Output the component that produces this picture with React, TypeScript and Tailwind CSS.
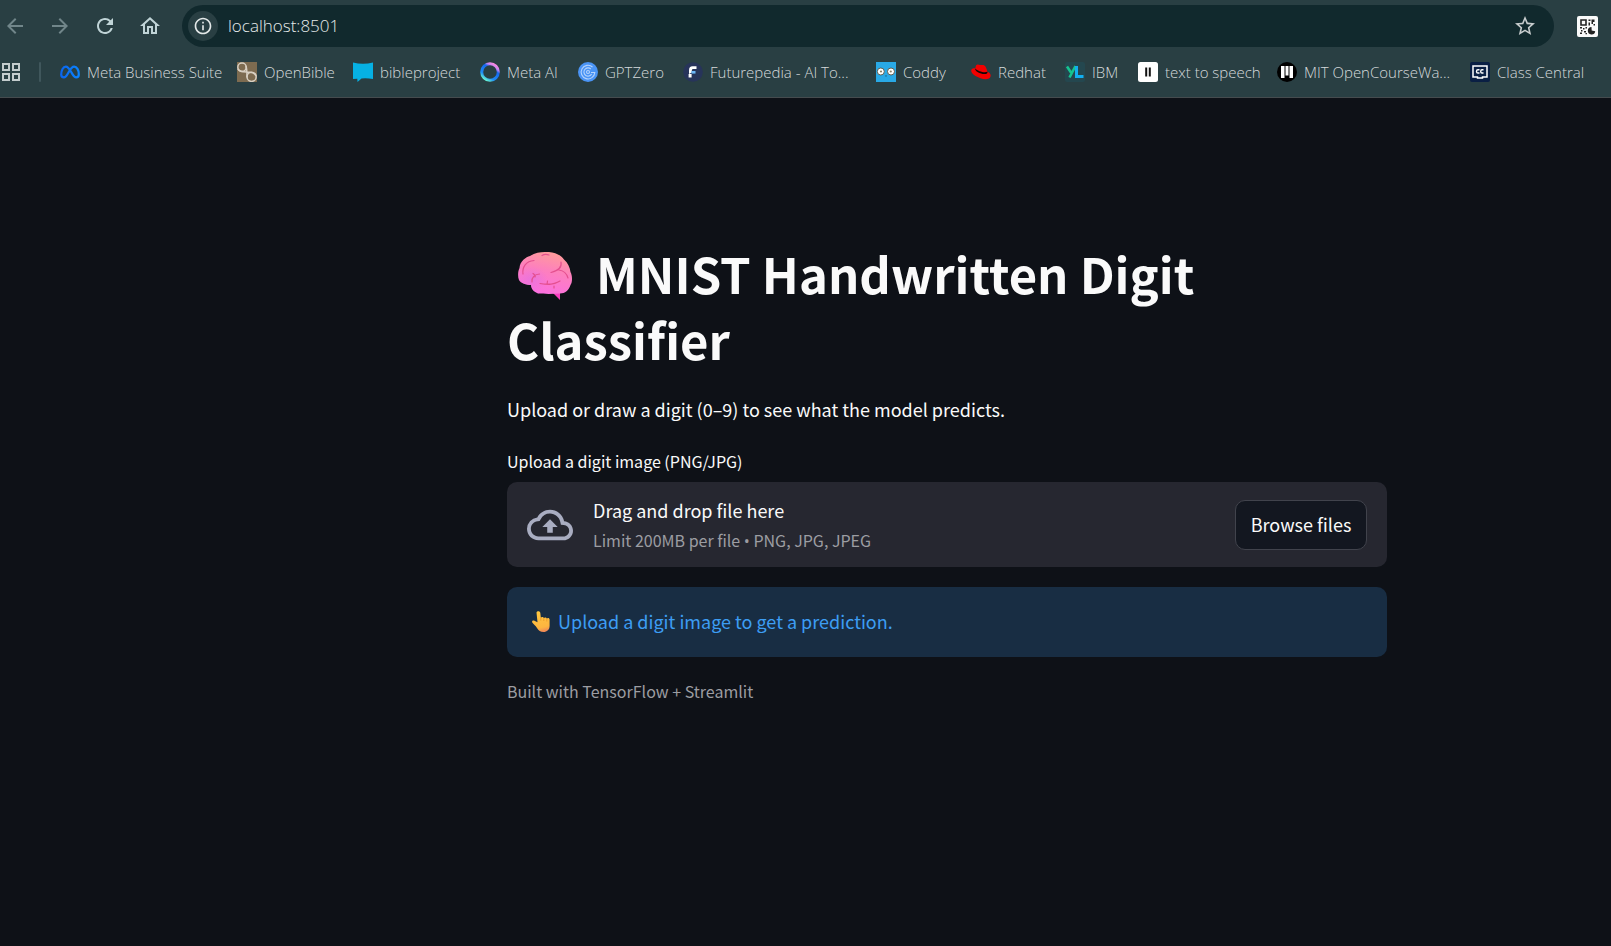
import type { ReactNode } from "react";
import { MdArrowBack, MdArrowForward, MdRefresh, MdOutlineHome, MdOutlineCloudUpload, MdStarBorder, MdInfoOutline } from "react-icons/md";

function MetaIcon() {
  return (
    <svg viewBox="0 0 20 20" className="size-5" aria-hidden="true">
      <defs>
        <linearGradient id="meta" x1="0" x2="1">
          <stop offset="0" stopColor="#0a66f0" />
          <stop offset="1" stopColor="#0a84ff" />
        </linearGradient>
      </defs>
      <path
        d="M1.2 12.6C1.2 8.2 3.2 4.6 5.8 4.6C8.2 4.6 9.6 7.2 11.2 10C12.8 12.8 14 15.4 16.2 15.4C18 15.4 18.8 14.2 18.8 12.2C18.8 8 16.8 4.6 14.2 4.6C12 4.6 10.5 6.8 8.9 9.7C7.2 12.8 6.1 15.4 3.9 15.4C2.2 15.4 1.2 14.4 1.2 12.6Z"
        fill="none"
        stroke="url(#meta)"
        strokeWidth="2.2"
      />
    </svg>
  );
}

function OpenBibleIcon() {
  return (
    <svg viewBox="0 0 20 20" className="size-5" aria-hidden="true">
      <rect width="20" height="20" fill="#7d6b50" />
      <g fill="none" stroke="#d9d0c2" strokeWidth="1.5">
        <circle cx="5" cy="5.2" r="4.2" />
        <circle cx="14.6" cy="14.8" r="4.6" />
        <path d="M1 7C2 10 7 10 10 10S18 11 19 14M9 4C10 7 10 12 10 15.500" />
      </g>
    </svg>
  );
}

function BibleProjectIcon() {
  return (
    <svg viewBox="0 0 20 20" className="size-5" aria-hidden="true">
      <path d="M0 0.500Q10 3 20 0.500V17Q14 16 8.500 16.500L4.500 20L4.300 16.700L0 17Z" fill="#06b1e4" />
    </svg>
  );
}

function MetaAiIcon() {
  return (
    <svg viewBox="0 0 20 20" className="size-5" aria-hidden="true">
      <defs>
        <linearGradient id="ring" x1="0.850" y1="0.050" x2="0.250" y2="1">
          <stop offset="0" stopColor="#ff8adf" />
          <stop offset="0.180" stopColor="#c583f5" />
          <stop offset="0.320" stopColor="#1668ee" />
          <stop offset="0.750" stopColor="#1e8bf5" />
          <stop offset="1" stopColor="#66f5d5" />
        </linearGradient>
      </defs>
      <circle cx="10" cy="10" r="8.300" fill="none" stroke="url(#ring)" strokeWidth="3" />
    </svg>
  );
}

function GptZeroIcon() {
  return (
    <svg viewBox="0 0 20 20" className="size-5" aria-hidden="true">
      <circle cx="10" cy="10" r="10" fill="#4a94f5" />
      <g fill="none" stroke="#b5d3fc" strokeWidth="1.100">
        <path d="M14.500 5A6.800 6.800 0 1 0 16.800 10.500H13" />
        <path d="M12.800 7A4.100 4.100 0 1 0 13.600 12" />
        <circle cx="10" cy="10" r="1.500" />
      </g>
    </svg>
  );
}

function FuturepediaIcon() {
  return (
    <svg viewBox="0 0 20 20" className="size-5" aria-hidden="true">
      <circle cx="10" cy="10" r="9.800" fill="#27345a" />
      <path d="M6 8.500Q6 4.300 9.500 4.300H13.500V7H9.800Q8.800 7 8.800 8.500V10.500L6 12Z" fill="#fff" />
      <path d="M8.500 9H12.500V11.600H8.500Z" fill="#6db7f7" />
      <path d="M5.600 12H8.600V15.500H5.600Z" fill="#fff" />
    </svg>
  );
}

function CoddyIcon() {
  return (
    <svg viewBox="0 0 20 20" className="size-5" aria-hidden="true">
      <rect width="20" height="20" fill="#29a9e6" />
      <g fill="#fff" stroke="#55503f" strokeWidth="0.900">
        <circle cx="4.800" cy="9.500" r="3.500" />
        <circle cx="15" cy="9.500" r="3.500" />
      </g>
      <g fill="#8b8063">
        <circle cx="5" cy="9.500" r="1.100" />
        <circle cx="14.800" cy="9.500" r="1.100" />
      </g>
      <path d="M8.800 13.500L10 15L11.200 13.500Z" fill="#17678e" />
    </svg>
  );
}

function RedhatIcon() {
  return (
    <svg viewBox="0 0 20 20" className="size-5" aria-hidden="true">
      <path
        d="M5 3.500C6 2 7.500 2.500 9 3C10.500 3.300 11.500 2.500 13 3.200C15 4.300 15.800 7 16.400 9.700C18.500 10.500 20 12 19.700 14C19 17.500 14 17.800 9.500 16.200C5 14.800 0 11.500 0.200 8.500C0.500 6.500 2.500 6.200 4.200 6.400Z"
        fill="#f20000"
      />
      <path d="M4.200 6.400C3.500 9.500 12 13.500 16 11.500Q16.800 11 16.400 9.700C13.500 11.200 6.500 9 4.200 6.400Z" fill="#120506" />
    </svg>
  );
}

function IbmIcon() {
  return (
    <svg viewBox="0 0 20 20" className="size-5" aria-hidden="true">
      <rect width="20" height="20" rx="2" fill="#24474f" />
      <path d="M2 4.500L6 10.500M10.500 4L4.500 15.500" fill="none" stroke="#15c48f" strokeWidth="2.600" />
      <path d="M11.500 4V14.500H18.500" fill="none" stroke="#12aef0" strokeWidth="3" />
    </svg>
  );
}

function SpeechIcon() {
  return (
    <svg viewBox="0 0 20 20" className="size-5" aria-hidden="true">
      <rect width="20" height="20" rx="2.500" fill="#fff" />
      <path d="M7.200 5.500H9.200V14.500H7.200ZM10.800 5.500H12.800V14.500H10.800Z" fill="#111" />
    </svg>
  );
}

function MitIcon() {
  return (
    <svg viewBox="0 0 20 20" className="size-5" aria-hidden="true">
      <circle cx="10" cy="10" r="10" fill="#000" />
      <path d="M4 4H7.500V16H4ZM8.500 4H11.500V13.500H8.500ZM12.500 4H16V16H12.500Z" fill="#fff" />
    </svg>
  );
}

function ClassCentralIcon() {
  return (
    <svg viewBox="0 0 20 20" className="size-5" aria-hidden="true">
      <rect width="20" height="20" rx="2" fill="#0a1f44" />
      <path d="M3 4H17V15H12.500V16H7.500V15H3Z" fill="none" stroke="#fff" strokeWidth="1.500" />
      <path d="M9.500 7.800H8Q6.500 7.800 6.500 9.400T8 11H9.500M13.500 7.800H12Q10.700 7.800 10.700 9.400T12 11H13.500" fill="none" stroke="#fff" strokeWidth="1.400" />
    </svg>
  );
}

function AppsIcon() {
  return (
    <svg viewBox="0 0 18 18" className="size-[18px]" aria-hidden="true">
      <path d="M1 1H7V7H1ZM11 1H17V7H11ZM1 11H7V17H1ZM11 11H17V17H11Z" fill="none" stroke="#c3cccd" strokeWidth="2" />
    </svg>
  );
}

function QrIcon() {
  return (
    <svg viewBox="0 0 21 21" className="size-[21px]" aria-hidden="true">
      <rect width="21" height="21" rx="2" fill="#fafafa" />
      <path d="M4 4H9V9H4Z" fill="none" stroke="#222" strokeWidth="1.600" />
      <path
        d="M11.500 3.500H13.500V5H11.500ZM14.500 3.500H17.500V6H16V8H14.500ZM11.500 6.500H13V9.500H11.500ZM16.500 8H18V9.500H16.500ZM3 11H5V12.500H3ZM6 12H7.500V13.500H6ZM8.500 11H10V12.500H8.500ZM4 14H5.500V15.500H4ZM3 16.500H5V18H3ZM7 15H9V16.500H7ZM8.500 17H10V18.200H8.500Z"
        fill="#222"
      />
      <path d="M14.500 11A3.700 3.700 0 1 0 18.200 15.200L14.700 14.500Z" fill="#222" />
    </svg>
  );
}

function BrainIcon() {
  return (
    <svg viewBox="0 0 54 48" className="h-12 w-[54px]" role="img" aria-label="Brain">
      <defs>
        <linearGradient id="brain" x1="0.700" y1="0" x2="0.400" y2="1">
          <stop offset="0" stopColor="#ff9d98" />
          <stop offset="0.450" stopColor="#fd80bd" />
          <stop offset="1" stopColor="#fb6fe0" />
        </linearGradient>
        <radialGradient id="lobe" cx="0.250" cy="0.650" r="0.300">
          <stop offset="0" stopColor="#d970e6" stopOpacity="0.500" />
          <stop offset="1" stopColor="#d970e6" stopOpacity="0" />
        </radialGradient>
        <path
          id="brain-shape"
          d="M27 0C35 -0.500 42 2 46 7.500C50 11 52 16 52.500 20C54.500 24 54.500 30 52.500 33C51 38 47 41.500 42 41.500C35 42 26 42 20 41.500C16 40 13 37 13 33C8 33 3 31.500 1 28C-0.500 24 0 19 1.500 16C2 9 8 5 12 4C17 0.500 22 0 27 0Z"
        />
      </defs>
      <path d="M34 40L42 48L42 39Z" fill="#f83fc0" />
      <use href="#brain-shape" fill="url(#brain)" />
      <use href="#brain-shape" fill="url(#lobe)" />
      <g fill="none" stroke="#e4508f" strokeWidth="1.200" strokeLinecap="round">
        <path d="M5 22C4 15 8 9 16 8.500" />
        <path d="M24 3.500Q27 1.500 31 3" />
        <path d="M14 30C13 26 17 22 21.500 22M15 21.500Q18 23.500 17 25" />
        <path d="M43 10C44 15 41 18.500 33 20.500M41 18Q48 19 50 26" />
        <path d="M22 31.500C28 32.500 35 33.500 42 29M29 32.500L29.500 29M36 34V36" />
      </g>
    </svg>
  );
}

function HandIcon() {
  return (
    <svg viewBox="0 0 18 21" className="h-[21px] w-[18px]" role="img" aria-label="Pointing up">
      <defs>
        <linearGradient id="hand" x1="0.300" y1="0" x2="0.500" y2="1">
          <stop offset="0" stopColor="#ffc83f" />
          <stop offset="0.800" stopColor="#fdb540" />
          <stop offset="1" stopColor="#f08a55" />
        </linearGradient>
      </defs>
      <path
        d="M4.500 1.500C5 -0.300 8 -0.300 8.300 1.800L8.800 6.500C10 5.500 11.500 6 11.800 7C12.800 6 14.500 6.300 14.800 7.500C16 6.500 17.500 7 17.600 8.500V15C17.600 18.500 15 21 11.500 21C8.500 21 6.500 19.500 5 17C3.500 14.500 1.500 13 0.300 11.500C-0.500 10 1 9 2.500 9.700L5.500 11.200Z"
        fill="url(#hand)"
      />
      <path d="M8.800 6.500V9.500M11.800 7V10M14.800 7.500V10.500" stroke="#e89224" strokeWidth="0.700" fill="none" />
    </svg>
  );
}

const bookmarks: { label: string; icon: ReactNode; width: string }[] = [
  { label: "Meta Business Suite", icon: <MetaIcon />, width: "w-[177px]" },
  { label: "OpenBible", icon: <OpenBibleIcon />, width: "w-[116px]" },
  { label: "bibleproject", icon: <BibleProjectIcon />, width: "w-[127px]" },
  { label: "Meta AI", icon: <MetaAiIcon />, width: "w-[98px]" },
  { label: "GPTZero", icon: <GptZeroIcon />, width: "w-[105px]" },
  { label: "Futurepedia - AI To...", icon: <FuturepediaIcon />, width: "w-[193px]" },
  { label: "Coddy", icon: <CoddyIcon />, width: "w-[95px]" },
  { label: "Redhat", icon: <RedhatIcon />, width: "w-[94px]" },
  { label: "IBM", icon: <IbmIcon />, width: "w-[73px]" },
  { label: "text to speech", icon: <SpeechIcon />, width: "w-[139px]" },
  { label: "MIT OpenCourseWa...", icon: <MitIcon />, width: "w-[193px]" },
  { label: "Class Central", icon: <ClassCentralIcon />, width: "w-[116px]" },
];

function BrowserBar() {
  return (
    <header className="border-b border-[#454b4e] bg-[#293f43] font-['Open_Sans',sans-serif]">
      <div className="flex items-center pt-[5px] pr-[13px]">
        <nav aria-label="Navigation" className="flex items-center gap-[21px] pl-[3px] text-2xl">
          <button type="button" aria-label="Back" className="text-[#71868a]"><MdArrowBack /></button>
          <button type="button" aria-label="Forward" className="text-[#71868a]"><MdArrowForward /></button>
          <button type="button" aria-label="Reload" className="text-[#c0d4d7]"><MdRefresh /></button>
          <button type="button" aria-label="Home" className="text-[#c0d4d7]"><MdOutlineHome /></button>
        </nav>
        <div className="ml-5 flex h-[42px] flex-1 items-center rounded-full bg-[#11292d] pr-[17px] pl-1.5">
          <button type="button" aria-label="Site information" className="flex size-[30px] items-center justify-center rounded-full bg-[#293f43] text-xl text-[#e3e8e8]">
            <MdInfoOutline />
          </button>
          <input aria-label="Address" defaultValue="localhost:8501" className="ml-2.5 flex-1 bg-transparent text-[17px] font-light text-[#e6ebeb] outline-none" />
          <button type="button" aria-label="Bookmark this page" className="text-2xl text-[#c7cccd]"><MdStarBorder /></button>
        </div>
        <button type="button" aria-label="QR code" className="ml-[23px]"><QrIcon /></button>
      </div>
      <nav aria-label="Bookmarks" className="flex h-[50px] items-center overflow-hidden pl-0.5">
        <button type="button" aria-label="Apps"><AppsIcon /></button>
        <span className="mr-[19px] ml-[19px] h-5 w-0.5 shrink-0 rounded-full bg-[#40575c]" />
        <ul className="flex">
          {bookmarks.map((b) => (
            <li key={b.label} className={`${b.width} shrink-0`}>
              <a href="#" className="flex items-center gap-[7px] text-[15px] font-light whitespace-nowrap text-[#d5dadb]">
                {b.icon}
                {b.label}
              </a>
            </li>
          ))}
        </ul>
      </nav>
    </header>
  );
}

export default function App() {
  return (
    <div className="min-h-screen bg-[#0e1117] font-['Noto_Sans_CJK_SC',sans-serif] text-[#fafafa]">
      <BrowserBar />
      <main className="ml-[507px] max-w-[880px] pt-[142px]">
        <h1 className="text-[49px] leading-[66px] font-bold">
          <span className="mr-6 ml-[11px] inline-block align-[-6px]"><BrainIcon /></span>
          MNIST Handwritten Digit Classifier
        </h1>
        <p className="mt-[21px] text-lg leading-8">Upload or draw a digit (0–9) to see what the model predicts.</p>
        <label htmlFor="digit" className="mt-5 block text-base leading-8">Upload a digit image (PNG/JPG)</label>
        <section className="mt-[5px] flex h-[85px] items-center rounded-[10px] bg-[#262730] px-5">
          <MdOutlineCloudUpload className="size-[46px] text-[#a9adc1]" aria-hidden="true" />
          <div className="ml-5 flex-1">
            <div className="text-lg leading-8">Drag and drop file here</div>
            <div className="text-base leading-7 text-[#9c9da2]">
              Limit 200MB per file <span className="font-['Open_Sans']">•</span> PNG, JPG, JPEG
            </div>
          </div>
          <button id="digit" type="button" className="h-[50px] w-[132px] rounded-[10px] border border-[#41434c] bg-[#131720] pb-0.5 text-lg">Browse files</button>
        </section>
        <div role="status" className="mt-5 flex h-[70px] items-center gap-2 rounded-[10px] bg-[#182d43] px-[25px] pb-0.5 text-lg text-[#3d9df3]">
          <HandIcon />
          <span>Upload a digit image to get a prediction.</span>
        </div>
        <p className="mt-5 text-base leading-7 text-[#9c9da2]">Built with TensorFlow + Streamlit</p>
      </main>
    </div>
  );
}
